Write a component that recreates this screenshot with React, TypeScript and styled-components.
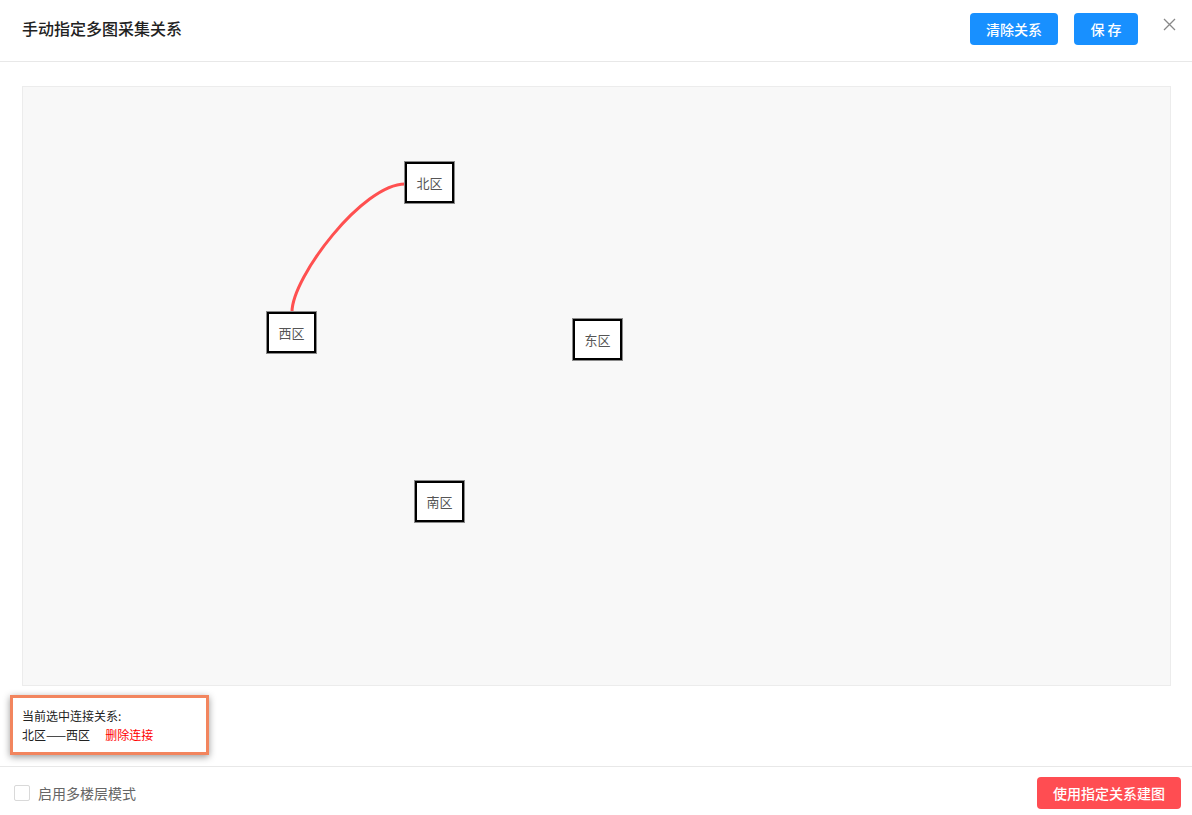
import styled, { createGlobalStyle } from "styled-components";

const GlobalStyle = createGlobalStyle`
  html, body {
    margin: 0;
    padding: 0;
    background: #fff;
    font-family: "Noto Sans CJK SC", "Noto Sans", sans-serif;
  }
  * { box-sizing: border-box; }
`;

const Page = styled.div`
  width: 1192px;
  height: 815px;
  display: flex;
  flex-direction: column;
  background: #fff;
  overflow: hidden;
`;

const Header = styled.div`
  height: 62px;
  border-bottom: 1px solid #e8e8e8;
  display: flex;
  align-items: center;
  padding: 0 16px 0 22px;
  flex-shrink: 0;
`;

const Title = styled.div`
  flex: 1;
  font-size: 16px;
  font-weight: 500;
  color: #222;
  margin-top: -6px;
`;

const Button = styled.button<{ $danger?: boolean; $width: number }>`
  width: ${(p) => p.$width}px;
  height: 32px;
  border: none;
  border-radius: 4px;
  background: ${(p) => (p.$danger ? "#ff4d52" : "#1890ff")};
  color: #fff;
  font-family: inherit;
  font-size: 14px;
  font-weight: 500;
  padding: 0;
  cursor: pointer;
`;

const HeaderActions = styled.div`
  display: flex;
  align-items: center;
  gap: 16px;
  margin-top: -4px;
`;

const Close = styled.button`
  border: none;
  background: none;
  padding: 0;
  margin-left: 24px;
  margin-top: -12px;
  width: 14px;
  height: 14px;
  display: flex;
  align-items: center;
  justify-content: center;
  cursor: pointer;
`;

const Body = styled.div`
  flex: 1;
  padding: 24px 21px 0 22px;
  display: flex;
  flex-direction: column;
`;

const Canvas = styled.div`
  position: relative;
  height: 600px;
  background: #f8f8f8;
  border: 1px solid #ececec;
`;

const Links = styled.svg`
  position: absolute;
  inset: 0;
  width: 100%;
  height: 100%;
`;

const Node = styled.div<{ $x: number; $y: number }>`
  position: absolute;
  left: ${(p) => p.$x + 1}px;
  top: ${(p) => p.$y + 1}px;
  width: 49px;
  height: 41px;
  border: 2px solid #000;
  box-shadow: 0 0 0 1px #8a8a8a;
  background: #fff;
  display: flex;
  align-items: center;
  justify-content: center;
  font-size: 13px;
  color: #555;
`;

const InfoPanel = styled.div`
  margin: 9px 0 0 -12px;
  width: 199px;
  height: 60px;
  border: 3px solid #f2855e;
  box-shadow: 0 2px 7px rgba(0, 0, 0, 0.4);
  background: #fff;
  padding: 8px 0 0 9px;
  font-size: 12px;
  line-height: 19px;
  color: #222;
`;

const DeleteLink = styled.span`
  color: #f00;
  margin-left: 15px;
  cursor: pointer;
`;

const Footer = styled.div`
  height: 49px;
  border-top: 1px solid #e8e8e8;
  display: flex;
  align-items: center;
  padding: 3px 11px 0 14px;
  flex-shrink: 0;
`;

const CheckLabel = styled.label`
  flex: 1;
  display: flex;
  align-items: center;
  gap: 8px;
  font-size: 14px;
  color: #666;
`;

const CheckBox = styled.span`
  width: 16px;
  height: 16px;
  border: 1px solid #d9d9d9;
  border-radius: 2px;
  background: #fff;
`;

const nodes = [
  { name: "北区", x: 381, y: 74 },
  { name: "西区", x: 243, y: 224 },
  { name: "东区", x: 549, y: 231 },
  { name: "南区", x: 391, y: 393 },
];

export default function App() {
  return (
    <Page>
      <GlobalStyle />
      <Header>
        <Title>手动指定多图采集关系</Title>
        <HeaderActions>
          <Button $width={88}>清除关系</Button>
          <Button $width={64}>保 存</Button>
        </HeaderActions>
        <Close aria-label="close">
          <svg width="13" height="13" viewBox="0 0 13 13">
            <path d="M1 1L12 12M12 1L1 12" stroke="#888" strokeWidth="1.3" fill="none" />
          </svg>
        </Close>
      </Header>
      <Body>
        <Canvas>
          <Links>
            <path
              d="M382 97 C 340 97, 269 190, 269 225"
              stroke="#ff5050"
              strokeWidth="3"
              fill="none"
            />
          </Links>
          {nodes.map((n) => (
            <Node key={n.name} $x={n.x} $y={n.y}>
              {n.name}
            </Node>
          ))}
        </Canvas>
        <InfoPanel>
          <div>当前选中连接关系:</div>
          <div>
            北区——西区
            <DeleteLink>删除连接</DeleteLink>
          </div>
        </InfoPanel>
      </Body>
      <Footer>
        <CheckLabel>
          <CheckBox />
          启用多楼层模式
        </CheckLabel>
        <Button $danger $width={144}>使用指定关系建图</Button>
      </Footer>
    </Page>
  );
}
